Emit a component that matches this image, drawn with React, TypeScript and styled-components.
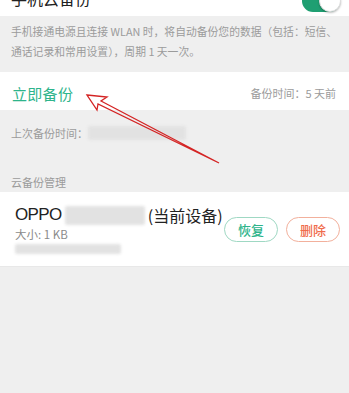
import React from "react";
import styled, { createGlobalStyle } from "styled-components";

const GlobalStyle = createGlobalStyle`
  html, body {
    margin: 0;
    padding: 0;
    background: #efefef;
  }
  body {
    font-family: "Noto Sans CJK SC", "Noto Sans", Roboto, sans-serif;
    -webkit-font-smoothing: antialiased;
  }
`;

const Colors = {
  green: "#2eb48b",
  greenBorder: "#9fd8c3",
  orange: "#f06b4b",
  orangeBorder: "#f2b09c",
  gray: "#efefef",
  hint: "#9b9b9b",
  text: "#222222",
};

const Page = styled.div`
  position: relative;
  width: 349px;
  min-height: 393px;
  overflow: hidden;
  background: ${Colors.gray};
`;

const TopRow = styled.div`
  height: 16px;
  overflow: hidden;
  background: #fff;
  display: flex;
  justify-content: space-between;
  align-items: flex-start;
  padding: 0 9px 0 11px;
`;

const Title = styled.div`
  margin-top: -12px;
  font-size: 16px;
  line-height: 20px;
  color: ${Colors.text};
`;

const Toggle = styled.div`
  margin-top: -10px;
  width: 38px;
  height: 22px;
  border-radius: 11px;
  background: #1f9f72;
  position: relative;
  &::after {
    content: "";
    position: absolute;
    right: -1px;
    top: 0;
    width: 20px;
    height: 20px;
    border-radius: 50%;
    background: #fff;
    border: 1px solid #ddd;
    box-shadow: 0 1px 2px rgba(0, 0, 0, 0.25);
  }
`;

const Hint = styled.div`
  padding: 5px 0 11px 11px;
  font-size: 10.8px;
  line-height: 20px;
  color: ${Colors.hint};
  white-space: nowrap;
`;

const ActionRow = styled.div`
  height: 38px;
  background: #fff;
  display: flex;
  justify-content: space-between;
  align-items: center;
  padding: 4px 13px 0 12px;
  box-sizing: border-box;
`;

const BackupNow = styled.div`
  font-size: 15px;
  color: ${Colors.green};
  letter-spacing: 0.3px;
`;

const SmallGray = styled.div`
  font-size: 11px;
  color: ${Colors.hint};
`;

const GrayBlock = styled.div`
  padding: 15px 11px 2px;
  display: flex;
  flex-direction: column;
`;

const LastLine = styled.div`
  display: flex;
  align-items: center;
  font-size: 11px;
  line-height: 16px;
  color: ${Colors.hint};
`;

const SectionHeader = styled.div`
  margin-top: 33px;
  font-size: 11px;
  line-height: 16px;
  color: ${Colors.hint};
`;

const Redacted = styled.div<{ w: number; h: number }>`
  flex-shrink: 0;
  width: ${(p) => p.w}px;
  height: ${(p) => p.h}px;
  background: #e2e2e2;
  filter: blur(1.5px);
  border-radius: 2px;
`;

const Card = styled.div`
  background: #fff;
  height: 75px;
  display: flex;
  align-items: center;
  justify-content: space-between;
  padding: 0 9px 0 15px;
  box-sizing: border-box;
  border-bottom: 1px solid #e8e8e8;
`;

const DeviceInfo = styled.div`
  display: flex;
  flex-direction: column;
  white-space: nowrap;
`;

const DeviceName = styled.div`
  display: flex;
  align-items: center;
  gap: 3px;
  font-size: 16px;
  line-height: 22px;
  color: ${Colors.text};
`;

const Oppo = styled.span`
  font-family: "Liberation Sans", Roboto, sans-serif;
  font-size: 17px;
  letter-spacing: -0.6px;
`;

const SizeText = styled.div`
  font-size: 11.5px;
  line-height: 16px;
  color: #8a8a8a;
  margin-bottom: 2px;
`;

const Buttons = styled.div`
  display: flex;
  flex-shrink: 0;
  gap: 8px;
`;

const PillButton = styled.button<{ tone: "green" | "orange" }>`
  width: 54px;
  height: 25px;
  border-radius: 13px;
  background: #fff;
  border: 1px solid
    ${(p) => (p.tone === "green" ? Colors.greenBorder : Colors.orangeBorder)};
  color: ${(p) => (p.tone === "green" ? Colors.green : Colors.orange)};
  font-family: inherit;
  font-size: 13px;
  font-weight: 500;
  padding: 0;
  display: flex;
  align-items: center;
  justify-content: center;
`;

const ArrowLayer = styled.svg`
  position: absolute;
  left: 0;
  top: 0;
  width: 349px;
  height: 393px;
  pointer-events: none;
`;

const App: React.FunctionComponent = (): JSX.Element => {
  return (
    <Page>
      <GlobalStyle />
      <TopRow>
        <Title>手机云备份</Title>
        <Toggle />
      </TopRow>
      <Hint>
        手机接通电源且连接 WLAN 时，将自动备份您的数据（包括：短信、
        <br />
        通话记录和常用设置），周期 1 天一次。
      </Hint>
      <ActionRow>
        <BackupNow>立即备份</BackupNow>
        <SmallGray>备份时间：5 天前</SmallGray>
      </ActionRow>
      <GrayBlock>
        <LastLine>
          上次备份时间：
          <Redacted w={98} h={14} />
        </LastLine>
        <SectionHeader>云备份管理</SectionHeader>
      </GrayBlock>
      <Card>
        <DeviceInfo>
          <DeviceName>
            <Oppo>OPPO</Oppo>
            <Redacted w={80} h={19} />
            <span>(当前设备)</span>
          </DeviceName>
          <SizeText>大小: 1 KB</SizeText>
          <Redacted w={106} h={10} />
        </DeviceInfo>
        <Buttons>
          <PillButton tone="green">恢复</PillButton>
          <PillButton tone="orange">删除</PillButton>
        </Buttons>
      </Card>
      <ArrowLayer viewBox="0 0 349 393">
        <path
          d="M87 95 L107 97 L101 101 L219 163 L98 104 L97 110 Z"
          fill="none"
          stroke="#d42424"
          strokeWidth="1.3"
          strokeLinejoin="miter"
        />
      </ArrowLayer>
    </Page>
  );
};

export default App;
